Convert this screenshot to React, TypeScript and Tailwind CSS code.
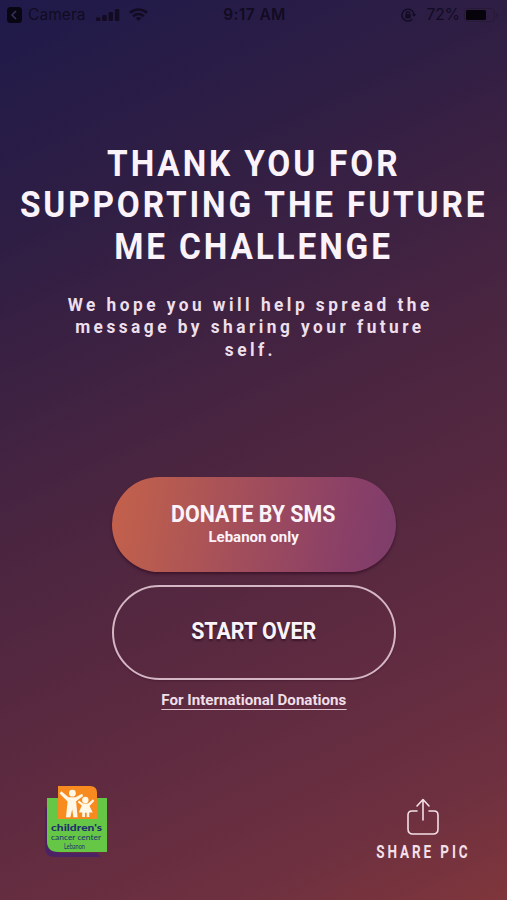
import React from 'react';

const titleLines = ['THANK YOU FOR', 'SUPPORTING THE FUTURE', 'ME CHALLENGE'];
const messageLines = ['We hope you will help spread the', 'message by sharing your future', 'self.'];

function StatusBar() {
  return (
    <header className="grid h-[30px] grid-cols-[1fr_auto_1fr] items-center pl-[7px] pr-[8px] font-['Inter',sans-serif] text-[16px] text-[#120b22]">
      <div className="flex items-center">
        <svg width="15" height="16" viewBox="0 0 15 16" className="shrink-0">
          <rect width="15" height="16" rx="3.5" fill="#080613" />
          <path d="M9 4 5 8l4 4" fill="none" stroke="#3b305e" strokeWidth="1.5" />
        </svg>
        <span className="ml-[6px] text-[15.6px]">Camera</span>
        <svg width="24" height="14" viewBox="0 0 24 14" fill="currentColor" className="ml-[10px] shrink-0">
          <rect x="0" y="9.5" width="4.4" height="3.5" rx="1" />
          <rect x="6.3" y="7" width="4.4" height="6" rx="1" />
          <rect x="12.6" y="4" width="4.4" height="9" rx="1" />
          <rect x="18.9" y="1" width="4.4" height="12" rx="1" />
        </svg>
        <svg width="19" height="14" viewBox="0 0 19 14" className="ml-[9px] shrink-0" fill="none" stroke="currentColor" strokeWidth="2.6">
          <path d="M1 4.8C6 0.3 13 0.3 18 4.8" />
          <path d="M4.2 8.2c3.2-2.8 7.4-2.8 10.6 0" />
          <path d="m9.5 13-2.8-3c1.7-1.3 3.9-1.3 5.6 0Z" fill="currentColor" stroke="none" />
        </svg>
      </div>
      <span className="pl-[3px] text-[15.5px] font-semibold tracking-[0.4px]">9:17 AM</span>
      <div className="flex items-center justify-end">
        <svg width="16" height="14" viewBox="0 0 16 14" fill="none" stroke="currentColor" strokeWidth="1.4">
          <path d="M11.3 11.3A6 6 0 1 1 13 7" />
          <path d="m10.6 6.3 2.4 2.2 2.4-2.2Z" fill="currentColor" stroke="none" />
          <rect x="4.4" y="6.3" width="5.2" height="4" fill="currentColor" stroke="none" />
          <path d="M5.4 6.5V5.2a1.6 1.6 0 0 1 3.2 0v1.3" />
        </svg>
        <span className="ml-[10px] text-[15.5px]">72%</span>
        <svg width="35" height="14" viewBox="0 0 35 14" className="ml-[4px]">
          <rect x="0.5" y="0.5" width="30" height="13" rx="3.5" fill="none" stroke="#281a37" />
          <rect x="2" y="2" width="20" height="10" rx="1.5" fill="#06030a" />
          <path d="M32.3 4.5c2 .8 2 4.2 0 5Z" fill="#281a37" />
        </svg>
      </div>
    </header>
  );
}

function CharityLogo() {
  return (
    <svg width="64" height="73" viewBox="0 0 64 73" aria-label="Children's Cancer Center Lebanon">
      <path d="M1 20v42q0 9 10 9h46l-4-4H16L4 56V24Z" fill="#4b2364" />
      <path d="M3 12h60v54H14Q3 66 3 55Z" fill="#66c747" />
      <path d="M14 0h32q7 0 7 7v26H14Z" fill="#f78b20" />
      <g fill="#fff8e8">
        <circle cx="28.4" cy="7.2" r="3.4" />
        <path d="m17.3 5.2 7.3 6h7l6.5-3.5 1 2.3-7 5.2 1.5 16h-4.2l-1.2-8-1.8 8h-4.4l1.6-15.8-8-8Z" />
        <circle cx="41.3" cy="14" r="3.2" />
        <path d="m35 14.5 4 3h5l5-4.2 1.2 1.8-4.7 5 3.2 6.4h-3.4V31h-2.6v-4.2h-1.8V31h-2.7v-4.5h-3.4l3-7-4-3.2Z" />
      </g>
      <g fontFamily="Lato, sans-serif" fill="#20306e">
        <text x="7" y="44.5" fontSize="9.5" fontWeight="900" textLength="51" lengthAdjust="spacingAndGlyphs">children's</text>
        <text x="7" y="53.5" fontSize="7.5" textLength="50" lengthAdjust="spacingAndGlyphs">cancer center</text>
        <text x="20" y="62.5" fontSize="7" textLength="21" lengthAdjust="spacingAndGlyphs">Lebanon</text>
      </g>
    </svg>
  );
}

function ShareButton() {
  return (
    <button className="flex w-[96px] flex-col items-center text-[#f3dfe7]">
      <svg width="32" height="38" viewBox="0 0 32 38" fill="none" stroke="currentColor" strokeWidth="1.6" strokeLinecap="round" strokeLinejoin="round">
        <path d="M10 13H5q-4 0-4 4v14q0 5 5 5h20q5 0 5-5V17q0-4-4-4h-5" />
        <path d="M16 22V2M10 8l6-6.5L22 8" />
      </svg>
      <span className="mt-[3px] origin-center scale-x-[0.71] whitespace-nowrap text-[19px] leading-[26px] font-bold tracking-[4.1px]">SHARE PIC</span>
    </button>
  );
}

export default function App() {
  return (
    <div className="flex h-[900px] w-[507px] flex-col overflow-hidden bg-[linear-gradient(155deg,#1e1a4a_0%,#2f1e44_22%,#4a2540_48%,#5d2a40_70%,#6d3040_88%,#7f363b_100%)] font-['Roboto',sans-serif] text-[#fbf3fa]">
      <StatusBar />

      <h1 className="mt-[113px] flex flex-col items-center text-[37.5px] leading-[41.3px] font-bold whitespace-nowrap">
        {titleLines.map((line) => (
          <span key={line} className="scale-x-[0.89] tracking-[3.2px]">{line}</span>
        ))}
      </h1>

      <p className="mt-[27px] flex flex-col items-center pr-[7px] text-[18.5px] leading-[22.4px] font-bold whitespace-nowrap text-[#eddfeb]">
        {messageLines.map((line) => (
          <span key={line} className="scale-x-[0.935] tracking-[3.7px]">{line}</span>
        ))}
      </p>

      <div className="mt-[116px] flex flex-col items-center">
        <button className="flex h-[95px] w-[284px] flex-col items-center rounded-full bg-[linear-gradient(100deg,#c4614b_0%,#b65a51_20%,#9c4a5e_55%,#893f67_82%,#7c3d6b_100%)] pt-[23px] shadow-[0_2px_3px_rgba(40,5,25,0.55)]">
          <span className="scale-x-[0.91] text-[23.5px] leading-[28px] font-bold whitespace-nowrap">DONATE BY SMS</span>
          <span className="scale-x-[0.97] text-[15.5px] leading-[19px] font-bold whitespace-nowrap">Lebanon only</span>
        </button>
        <button className="mt-[13px] flex h-[95px] w-[284px] items-center justify-center rounded-full border-2 border-[#d5b6c4] pb-[2px] shadow-[0_1px_2px_rgba(40,5,25,0.3)]">
          <span className="scale-x-[0.91] text-[23.5px] font-bold whitespace-nowrap [text-shadow:0_2px_2px_rgba(30,5,20,0.5)]">START OVER</span>
        </button>
        <a className="mt-[12px] scale-x-[0.975] border-b border-[#dfc4d0] text-[15.5px] leading-[17px] font-bold whitespace-nowrap text-[#f0dfe8]">
          For International Donations
        </a>
      </div>

      <footer className="mt-[76px] flex items-start justify-between pr-[36px] pl-[44px]">
        <CharityLogo />
        <div className="pt-[12px]">
          <ShareButton />
        </div>
      </footer>
    </div>
  );
}
